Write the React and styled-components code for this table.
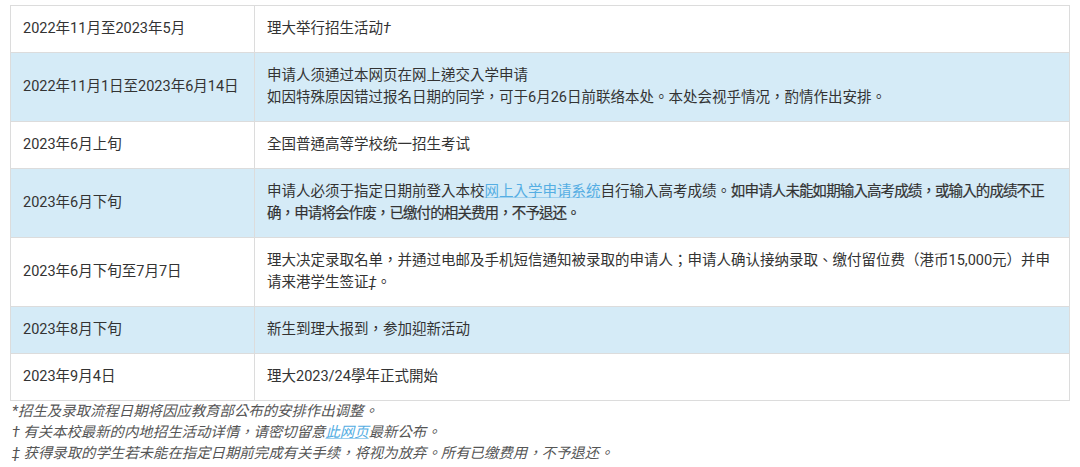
import styled, { createGlobalStyle } from 'styled-components';

const GlobalStyle = createGlobalStyle`
  body {
    margin: 0;
    background: #fff;
    font-family: Roboto, "Noto Sans CJK TC", sans-serif;
    color: #333;
  }
`;

const Page = styled.div`
  padding: 5px 10px 0 10px;
  width: 1060px;
`;

const Table = styled.table`
  width: 1060px;
  border-collapse: collapse;
  table-layout: fixed;
  font-size: 14.5px;
  line-height: 22px;
`;

const Row = styled.tr`
  background: ${p => (p.$alt ? '#d5ebf7' : '#fff')};
`;

const Cell = styled.td`
  border: 1px solid #dcdcdc;
  padding: 12px 12px;
  vertical-align: middle;
  color: #333;
`;

const Mark = styled.i`
  font-style: italic;
`;

const Strong = styled.span`
  -webkit-text-stroke: 0.2px #333;
  letter-spacing: -0.9px;
`;

const Link = styled.a`
  color: #55aee3;
  text-decoration: underline;
  text-decoration-color: #9fd0ee;
  cursor: pointer;
`;

const Notes = styled.div`
  padding-left: 2px;
  font-size: 14.4px;
  line-height: 21px;
  font-style: italic;
  color: #555;
  p {
    margin: 0;
  }
`;

const rows = [
  { date: '2022年11月至2023年5月', text: <>理大举行招生活动<Mark>†</Mark></> },
  {
    date: '2022年11月1日至2023年6月14日',
    text: <>申请人须通过本网页在网上递交入学申请<br />如因特殊原因错过报名日期的同学，可于6月26日前联络本处。本处会视乎情况，酌情作出安排。</>,
  },
  { date: '2023年6月上旬', text: '全国普通高等学校统一招生考试' },
  {
    date: '2023年6月下旬',
    text: <>申请人必须于指定日期前登入本校<Link>网上入学申请系统</Link>自行输入高考成绩。<Strong>如申请人未能如期输入高考成绩，或输入的成绩不正确，申请将会作废，已缴付的相关费用，不予退还。</Strong></>,
  },
  {
    date: '2023年6月下旬至7月7日',
    text: <>理大决定录取名单，并通过电邮及手机短信通知被录取的申请人；申请人确认接纳录取、缴付留位费（港币15,000元）并申请来港学生签证<Mark>‡</Mark>。</>,
  },
  { date: '2023年8月下旬', text: '新生到理大报到，参加迎新活动' },
  { date: '2023年9月4日', text: '理大2023/24學年正式開始' },
];

function App() {
  return (
    <Page>
      <GlobalStyle />
      <Table>
        <colgroup>
          <col style={{ width: 244 }} />
          <col />
        </colgroup>
        <tbody>
          {rows.map((r, i) => (
            <Row key={i} $alt={i % 2 === 1}>
              <Cell>{r.date}</Cell>
              <Cell>{r.text}</Cell>
            </Row>
          ))}
        </tbody>
      </Table>
      <Notes>
        <p>*招生及录取流程日期将因应教育部公布的安排作出调整。</p>
        <p>† 有关本校最新的内地招生活动详情，请密切留意<Link>此网页</Link>最新公布。</p>
        <p>‡ 获得录取的学生若未能在指定日期前完成有关手续，将视为放弃。所有已缴费用，不予退还。</p>
      </Notes>
    </Page>
  );
}

export default App;
